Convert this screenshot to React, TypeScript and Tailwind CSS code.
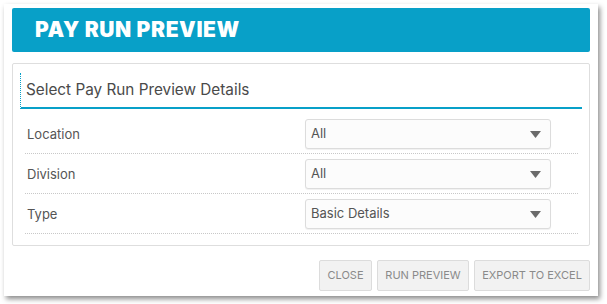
const rows = [
  { label: "Location", value: "All" },
  { label: "Division", value: "All" },
  { label: "Type", value: "Basic Details" },
];

function SelectBox({ value }: { value: string }) {
  return (
    <div className="flex items-center justify-between w-[246px] h-[30px] border border-[#dcdcdc] rounded-[3px] bg-[#fcfcfc] shadow-[0_1px_1px_rgba(0,0,0,0.06)] pl-[5px] pr-[8px]">
      <span className="text-[13px] text-[#555]">{value}</span>
      <svg width="11" height="7" viewBox="0 0 11 7" className="mr-[1px]">
        <polygon points="0,0 11,0 5.5,7" fill="#6b6b6b" />
      </svg>
    </div>
  );
}

export default function App() {
  return (
    <div className="w-[607px] h-[304px] bg-white font-['Inter','Liberation_Sans',sans-serif]">
      <div className="ml-[4px] pt-[4px]">
        <div className="w-[594px] h-[292px] bg-white shadow-[2px_3px_5px_rgba(0,0,0,0.45)] px-[8px] pt-[4px] flex flex-col">
          <div className="h-[44px] bg-[#08a0c8] rounded-[2px] flex items-center pl-[23px]">
            <h1 className="text-white text-[21px] font-black tracking-[0.6px]">PAY RUN PREVIEW</h1>
          </div>

          <div className="mt-[11px] h-[183px] border border-[#dedede] rounded-[2px] px-[7px] pt-[9px]">
            <div className="h-[36px] border-l border-dotted border-l-[#08a0c8] border-b-2 [border-bottom-style:solid] border-b-[#08a0c8] flex items-center pl-[5px]">
              <span className="text-[15.3px] text-[#4a4a4a]">Select Pay Run Preview Details</span>
            </div>
            <div className="mx-[5px] mt-[5px] w-[553px]">
              {rows.map((r) => (
                <div
                  key={r.label}
                  className="flex items-start h-[40px] pt-[5px] border-b border-dotted border-[#c8c8c8]"
                >
                  <span className="w-[280px] pl-[2px] text-[13px] text-[#555] leading-[30px] h-[30px]">{r.label}</span>
                  <SelectBox value={r.value} />
                </div>
              ))}
            </div>
          </div>

          <div className="flex justify-end gap-[5px] mt-[14px]">
            <button className="h-[31px] w-[53px] bg-[#f2f2f2] border border-[#dcdcdc] rounded-[2px] text-[11px] text-[#8a8a8a]">CLOSE</button>
            <button className="h-[31px] w-[92px] bg-[#f2f2f2] border border-[#dcdcdc] rounded-[2px] text-[11px] text-[#8a8a8a]">RUN PREVIEW</button>
            <button className="h-[31px] w-[116px] bg-[#f2f2f2] border border-[#dcdcdc] rounded-[2px] text-[11px] text-[#8a8a8a]">EXPORT TO EXCEL</button>
          </div>
        </div>
      </div>
    </div>
  );
}
